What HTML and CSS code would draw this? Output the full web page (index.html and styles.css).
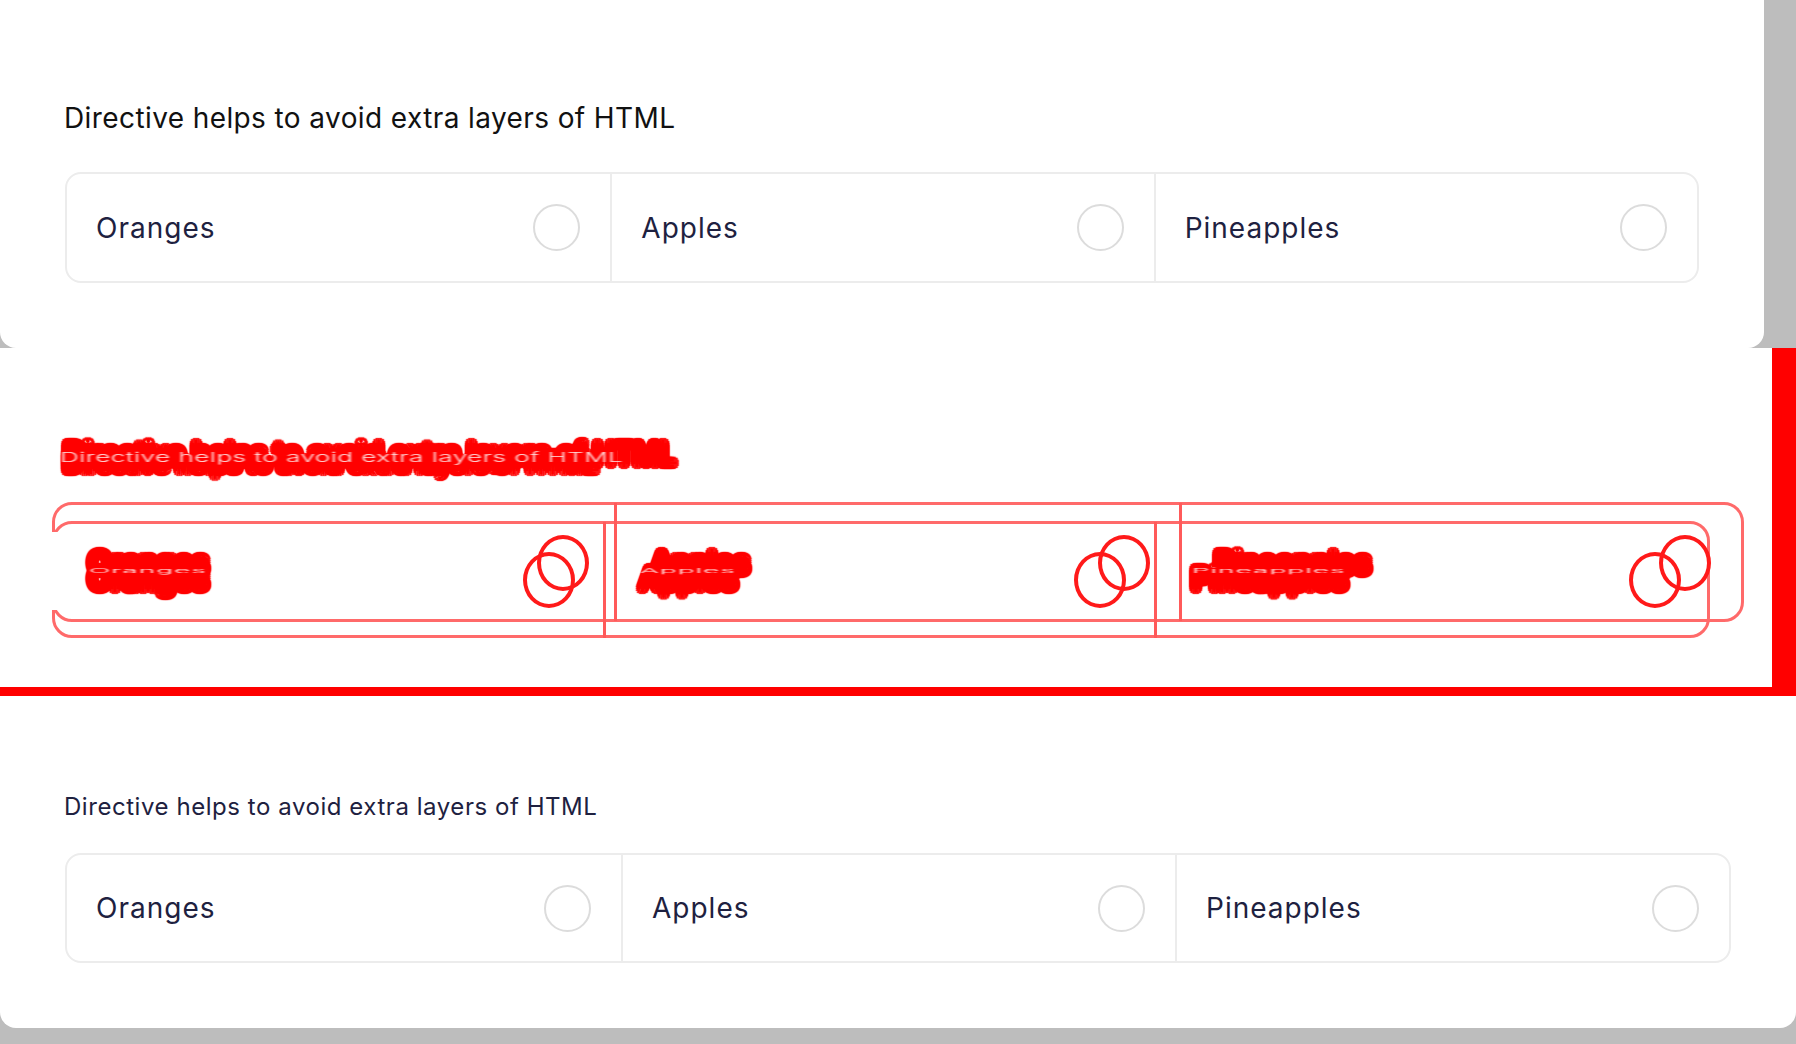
FILE: index.html
```html
<!DOCTYPE html>
<html lang="en">
<head>
<meta charset="utf-8">
<title>Directive demo</title>
<link rel="stylesheet" href="styles.css">
</head>
<body>
  <section class="panel panel-top">
    <h2 class="title title-lg">Directive helps to avoid extra layers of HTML</h2>
    <div class="options">
      <div class="option"><span class="label">Oranges</span><span class="radio"></span></div>
      <div class="option"><span class="label">Apples</span><span class="radio"></span></div>
      <div class="option"><span class="label">Pineapples</span><span class="radio"></span></div>
    </div>
  </section>

  <section class="diff">
    <div class="d-title d-title-a">Directive helps to avoid extra layers of HTML</div>
    <div class="d-title d-title-b" data-t="Directive helps to avoid extra layers of HTML">Directive helps to avoid extra layers of HTML</div>
    <div class="d-box d-box-a"></div>
    <div class="d-box d-box-b"></div>
    <div class="d-cover"></div>
    <div class="d-div d-div-a1"></div>
    <div class="d-div d-div-a2"></div>
    <div class="d-div d-div-b1"></div>
    <div class="d-div d-div-b2"></div>
    <div class="d-label d-la1">Oranges</div>
    <div class="d-label d-la2">Apples</div>
    <div class="d-label d-la3">Pineapples</div>
    <div class="d-label d-lb1" data-t="Oranges">Oranges</div>
    <div class="d-label d-lb2" data-t="Apples">Apples</div>
    <div class="d-label d-lb3" data-t="Pineapples">Pineapples</div>
    <div class="d-ring d-ra1"></div>
    <div class="d-ring d-ra2"></div>
    <div class="d-ring d-ra3"></div>
    <div class="d-ring d-rb1"></div>
    <div class="d-ring d-rb2"></div>
    <div class="d-ring d-rb3"></div>
  </section>

  <section class="panel panel-bottom">
    <h2 class="title title-sm">Directive helps to avoid extra layers of HTML</h2>
    <div class="options">
      <div class="option"><span class="label">Oranges</span><span class="radio"></span></div>
      <div class="option"><span class="label">Apples</span><span class="radio"></span></div>
      <div class="option"><span class="label">Pineapples</span><span class="radio"></span></div>
    </div>
  </section>
</body>
</html>
```

FILE: styles.css
```css
* { box-sizing: border-box; }

html, body {
  margin: 0;
  padding: 0;
}

body {
  background: #bdbdbd;
  font-family: "Inter", "Noto Sans", sans-serif;
  width: 1796px;
  height: 1044px;
  overflow: hidden;
}

.panel {
  background: #ffffff;
  border-radius: 0 0 16px 16px;
  padding: 0 65px;
  display: flex;
  flex-direction: column;
}

.panel-top {
  width: 1764px;
  height: 348px;
  padding-top: 101px;
}

.panel-bottom {
  width: 1796px;
  height: 332px;
  padding-top: 96px;
}

.title {
  margin: 0;
  font-weight: 400;
  margin-left: -1px;
}

.title-lg {
  font-size: 28px;
  line-height: 34px;
  color: #111111;
  letter-spacing: 0.4px;
  margin-bottom: 37px;
}

.title-sm {
  font-size: 24px;
  line-height: 30px;
  color: #1e2140;
  letter-spacing: 0.55px;
  margin-bottom: 31px;
}

.options {
  display: grid;
  grid-template-columns: 1fr 1fr 1fr;
  border: 2px solid #ececec;
  border-radius: 16px;
  height: 111px;
}

.panel-bottom .options { height: 110px; }

.option {
  display: flex;
  align-items: center;
  justify-content: space-between;
  padding: 0 30px 0 29px;
  border-left: 2px solid #ececec;
}

.option:first-child { border-left: none; }

.label {
  font-size: 28px;
  color: #1e2140;
  letter-spacing: 1px;
}

.radio {
  width: 47px;
  height: 47px;
  border-radius: 50%;
  border: 2px solid #dcdcdc;
}

/* diff band */
.diff {
  position: relative;
  width: 1796px;
  height: 348px;
  background: #ffffff;
  border-right: 24px solid #ff0000;
  border-bottom: 9px solid #ff0000;
  overflow: hidden;
}

.d-title,
.d-label {
  position: absolute;
  color: #ff0000;
  white-space: nowrap;
  text-shadow:
    5px 0 1px #f00, -5px 0 1px #f00, 0 5px 1px #f00, 0 -5px 1px #f00,
    4px 4px 1px #f00, -4px 4px 1px #f00, 4px -4px 1px #f00, -4px -4px 1px #f00,
    2px 5px 1px #f00, -2px 5px 1px #f00, 2px -5px 1px #f00, -2px -5px 1px #f00,
    5px 2px 1px #f00, -5px 2px 1px #f00, 5px -2px 1px #f00, -5px -2px 1px #f00,
    3px 0 0 #f00, -3px 0 0 #f00, 0 3px 0 #f00, 0 -3px 0 #f00,
    0 0 3px #f00;
}

.d-title-b::after,
.d-lb1::after,
.d-lb2::after,
.d-lb3::after {
  content: attr(data-t);
  position: absolute;
  left: 0;
  top: 0;
  display: block;
  color: rgba(255, 255, 255, 0.9);
  text-shadow: none;
  white-space: nowrap;
  font-weight: 300;
  filter: blur(1.2px);
}

.d-title-b::after {
  font-size: 26px;
  letter-spacing: 0.5px;
  transform: translate(-4px, -6px) scaleY(0.5);
  transform-origin: 0 50%;
}

.d-lb1::after,
.d-lb2::after,
.d-lb3::after {
  transform: translateY(-8px) scaleY(0.22);
  transform-origin: 0 50%;
}

.d-title { left: 64px; }
.d-title-a { top: 89px; font-size: 28px; line-height: 34px; letter-spacing: 0.4px; }
.d-title-b { top: 100px; font-size: 24px; line-height: 30px; letter-spacing: 0.55px; }

.d-box {
  position: absolute;
  left: 52px;
  border: 3px solid #ff6a6a;
  border-radius: 20px;
}

.d-box-a { top: 154px; width: 1692px; height: 120px; }
.d-box-b { top: 173px; width: 1658px; height: 117px; }

.d-cover {
  position: absolute;
  left: 48px;
  top: 184px;
  width: 10px;
  height: 78px;
  background: #ffffff;
}

.d-div {
  position: absolute;
  width: 3px;
  background: #ff5a5a;
}

.d-div-a1 { left: 614px; top: 155px; height: 118px; }
.d-div-a2 { left: 1179px; top: 155px; height: 118px; }
.d-div-b1 { left: 603px; top: 174px; height: 116px; }
.d-div-b2 { left: 1154px; top: 174px; height: 116px; }

.d-label {
  font-size: 28px;
  line-height: 34px;
  letter-spacing: 1px;
}

.d-la1 { left: 89px; top: 198px; }
.d-la2 { left: 652px; top: 198px; }
.d-la3 { left: 1215px; top: 198px; }
.d-lb1 { left: 89px; top: 214px; }
.d-lb2 { left: 640px; top: 214px; }
.d-lb3 { left: 1192px; top: 214px; }

.d-ring {
  position: absolute;
  width: 52px;
  height: 56px;
  border: 4px solid #ff1a1a;
  border-radius: 50%;
}

.d-ra1 { left: 537px; top: 187px; }
.d-ra2 { left: 1098px; top: 187px; }
.d-ra3 { left: 1659px; top: 187px; }
.d-rb1 { left: 523px; top: 204px; }
.d-rb2 { left: 1074px; top: 204px; }
.d-rb3 { left: 1629px; top: 204px; }
```
